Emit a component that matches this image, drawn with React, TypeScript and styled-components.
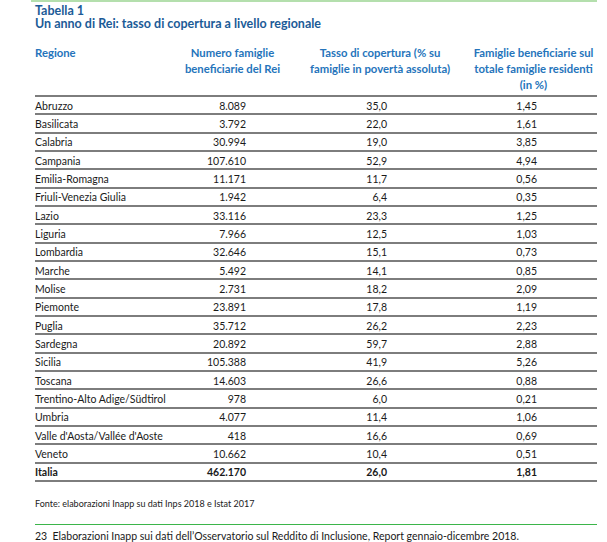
import React from "react";
import styled, { createGlobalStyle } from "styled-components";

const Global = createGlobalStyle`
  html, body { margin: 0; padding: 0; background: #fff; }
  body { font-family: Lato, "Open Sans", sans-serif; color: #1a1a1a; }
`;

const Page = styled.div`
  width: 607px;
  height: 542px;
  box-sizing: border-box;
  padding: 0 10px 0 35px;
  overflow: hidden;
`;

const TopRule = styled.div`
  height: 2px;
  background: #b4dfad;
  margin-left: -4px;
`;

const TitleBlock = styled.div`
  margin-top: 2px;
`;

const Title = styled.div`
  font-weight: 700;
  font-size: 12.5px;
  line-height: 13px;
  color: #1b5b97;
`;

const cols = "140px 115px 180px 127px";

const HeadRow = styled.div`
  display: grid;
  grid-template-columns: ${cols};
  padding: 15px 0 2px;
  border-bottom: 2px solid #7d7d7d;
`;

const HeadCell = styled.div<{ $align?: string }>`
  font-weight: 700;
  font-size: 11.3px;
  line-height: 16px;
  color: #2574bb;
  text-align: ${(p) => p.$align || "center"};
  white-space: nowrap;
`;

const Row = styled.div<{ $total?: boolean }>`
  display: grid;
  grid-template-columns: ${cols};
  height: 18.33px;
  align-items: center;
  box-sizing: border-box;
  border-bottom: 2px solid #7d7d7d;
  font-size: 10.5px;
  font-weight: ${(p) => (p.$total ? 700 : 400)};
`;

const Cell = styled.div<{ $pr?: number }>`
  text-align: ${(p) => (p.$pr !== undefined ? "right" : "left")};
  padding-right: ${(p) => p.$pr || 0}px;
  padding-top: 1px;
  white-space: nowrap;
`;

const Source = styled.div`
  font-size: 9px;
  line-height: 11px;
  margin-top: 16px;
  color: #222;
`;

const BottomRule = styled.div`
  height: 1px;
  background: #3bb54a;
  margin-top: 15px;
`;

const Note = styled.div`
  font-size: 10.5px;
  line-height: 13px;
  margin-top: 5px;
  color: #1a1a1a;
`;

const data: [string, string, string, string][] = [
  ["Abruzzo", "8.089", "35,0", "1,45"],
  ["Basilicata", "3.792", "22,0", "1,61"],
  ["Calabria", "30.994", "19,0", "3,85"],
  ["Campania", "107.610", "52,9", "4,94"],
  ["Emilia-Romagna", "11.171", "11,7", "0,56"],
  ["Friuli-Venezia Giulia", "1.942", "6,4", "0,35"],
  ["Lazio", "33.116", "23,3", "1,25"],
  ["Liguria", "7.966", "12,5", "1,03"],
  ["Lombardia", "32.646", "15,1", "0,73"],
  ["Marche", "5.492", "14,1", "0,85"],
  ["Molise", "2.731", "18,2", "2,09"],
  ["Piemonte", "23.891", "17,8", "1,19"],
  ["Puglia", "35.712", "26,2", "2,23"],
  ["Sardegna", "20.892", "59,7", "2,88"],
  ["Sicilia", "105.388", "41,9", "5,26"],
  ["Toscana", "14.603", "26,6", "0,88"],
  ["Trentino-Alto Adige/Südtirol", "978", "6,0", "0,21"],
  ["Umbria", "4.077", "11,4", "1,06"],
  ["Valle d'Aosta/Vallée d'Aoste", "418", "16,6", "0,69"],
  ["Veneto", "10.662", "10,4", "0,51"],
];

export default function App() {
  return (
    <Page>
      <Global />
      <TopRule />
      <TitleBlock>
        <Title>Tabella 1</Title>
        <Title>Un anno di Rei: tasso di copertura a livello regionale</Title>
      </TitleBlock>
      <HeadRow>
        <HeadCell $align="left">Regione</HeadCell>
        <HeadCell>Numero famiglie<br />beneficiarie del Rei</HeadCell>
        <HeadCell>Tasso di copertura (% su<br />famiglie in povertà assoluta)</HeadCell>
        <HeadCell>Famiglie beneficiarie sul<br />totale famiglie residenti<br />(in %)</HeadCell>
      </HeadRow>
      {data.map((r) => (
        <Row key={r[0]}>
          <Cell>{r[0]}</Cell>
          <Cell $pr={44}>{r[1]}</Cell>
          <Cell $pr={83}>{r[2]}</Cell>
          <Cell $pr={60}>{r[3]}</Cell>
        </Row>
      ))}
      <Row $total>
        <Cell>Italia</Cell>
        <Cell $pr={44}>462.170</Cell>
        <Cell $pr={83}>26,0</Cell>
        <Cell $pr={60}>1,81</Cell>
      </Row>
      <Source>Fonte: elaborazioni Inapp su dati Inps 2018 e Istat 2017</Source>
      <BottomRule />
      <Note>23&nbsp; Elaborazioni Inapp sui dati dell’Osservatorio sul Reddito di Inclusione, Report gennaio-dicembre 2018.</Note>
    </Page>
  );
}
